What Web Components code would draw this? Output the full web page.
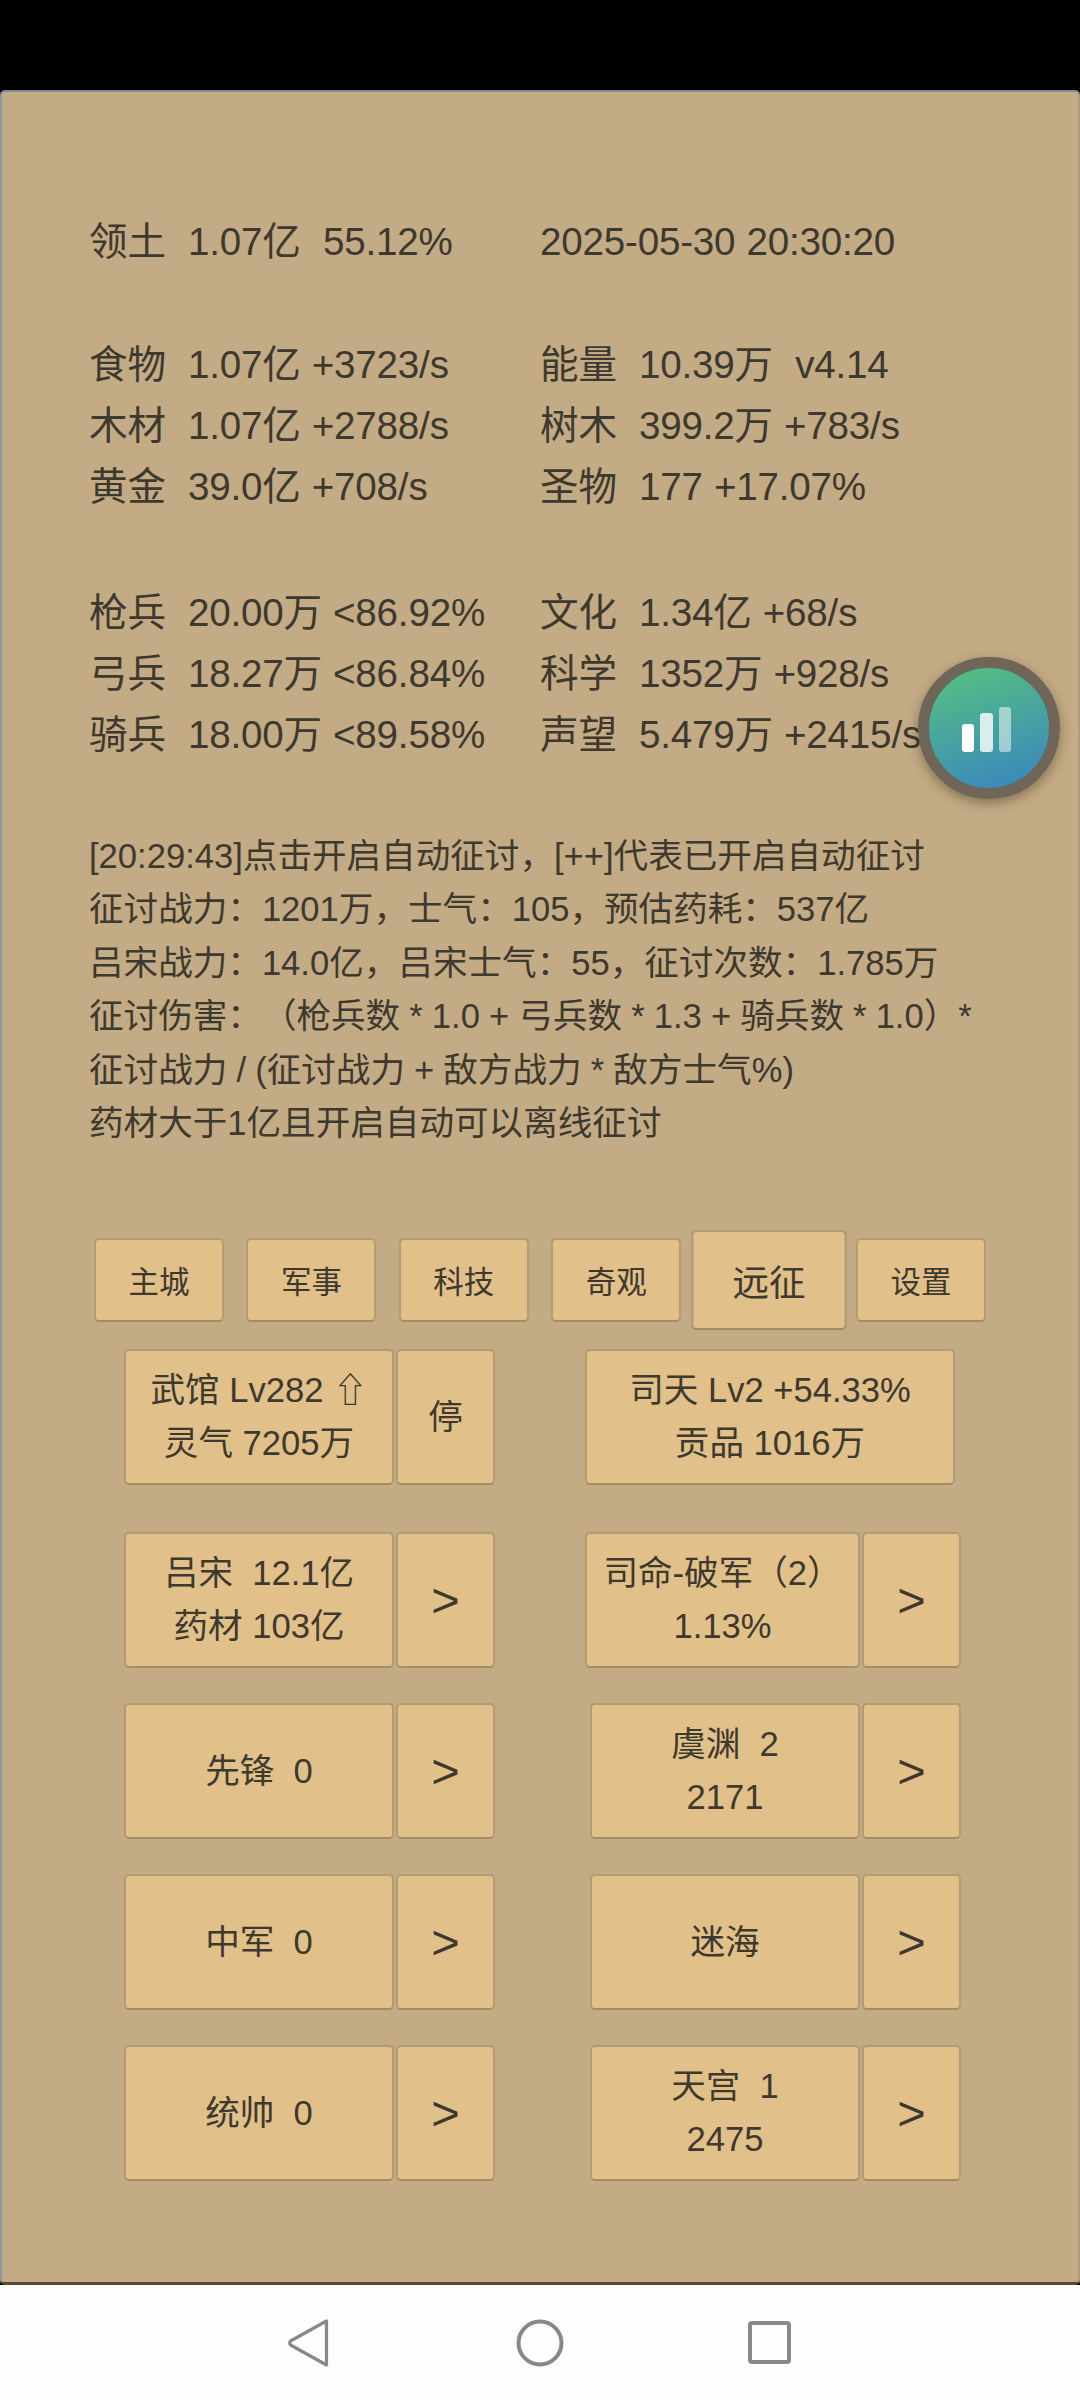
<!DOCTYPE html>
<html lang="zh-CN">
<head>
  <meta charset="UTF-8">
  <title>Game</title>
  <style>
    html, body { margin: 0; background: #000; }
    body { font-family: "Liberation Sans", "Noto Sans CJK SC", sans-serif; text-spacing-trim: space-all; }
  </style>
</head>
<body>
  <script>
    const define = (name, html) => customElements.define(name, class extends HTMLElement {
      constructor() {
        super()
        this.attachShadow({ mode: 'open' }).innerHTML = html
      }
    })

    define('phone-screen', `
      <style>
        :host { display: flex; flex-direction: column; width: 1080px; height: 2400px; background: #000; }
      </style>
      <slot></slot>
    `)

    define('game-panel', `
      <style>
        :host {
          display: block;
          position: relative;
          box-sizing: border-box;
          height: 2195px;
          margin-top: 90px;
          padding-top: 119px;
          background: #c3ab85;
          color: #3d392e;
          border-top: 2px solid #7d8a96;
          border-left: 2px solid #8b97a0;
          border-right: 2px solid #a89c83;
          border-bottom: 3px solid #5a4c33;
          border-radius: 5px;
        }
      </style>
      <slot></slot>
    `)

    define('res-block', `
      <style>
        :host {
          display: grid;
          grid-template-columns: 451px auto;
          padding-left: 87px;
          margin-bottom: 62px;
          font-size: 38.6px;
          letter-spacing: -.2px;
          word-spacing: .6px;
          line-height: 61px;
          white-space: pre;
        }
        :host([wide]) { margin-bottom: 65px; }
      </style>
      <slot></slot>
    `)

    define('log-text', `
      <style>
        :host {
          display: block;
          padding-left: 87px;
          font-size: 34.6px;
          word-spacing: -.5px;
          line-height: 53.4px;
          white-space: nowrap;
        }
      </style>
      <slot></slot>
    `)

    define('tab-bar', `
      <style>
        :host { display: flex; justify-content: center; gap: 22.4px; margin-top: 88px; }
      </style>
      <slot></slot>
    `)

    define('tab-btn', `
      <style>
        :host {
          display: flex;
          align-items: center;
          justify-content: center;
          box-sizing: border-box;
          width: 130px;
          height: 84px;
          font-size: 30.5px;
          background: #e1c08a;
          border: 2px solid #b39c72;
          border-bottom-color: #a48d64;
          border-radius: 5px;
        }
        :host([active]) { transform: scale(1.2); }
      </style>
      <slot></slot>
    `)

    define('act-row', `
      <style>
        :host {
          display: flex;
          height: 136px;
          margin-top: 35px;
          padding-left: 122px;
        }
        .left { display: flex; gap: 2px; width: 461px; }
        .right { display: flex; gap: 2px; }
      </style>
      <div class="left"><slot name="left"></slot></div>
      <div class="right"><slot name="right"></slot></div>
    `)

    define('act-btn', `
      <style>
        :host {
          display: flex;
          align-items: center;
          justify-content: center;
          box-sizing: border-box;
          width: 270px;
          height: 136px;
          font-size: 34.6px;
          line-height: 53px;
          text-align: center;
          white-space: pre;
          background: #e1c08a;
          border: 2px solid #b39c72;
          border-bottom-color: #a48d64;
          border-radius: 5px;
        }
        :host([arrow]) { width: 99px; font-size: 49px; }
        :host([stop]) { width: 99px; }
      </style>
      <div><slot></slot></div>
    `)

    define('float-ball', `
      <style>
        :host {
          position: absolute;
          left: 916px;
          top: 565px;
          display: flex;
          align-items: center;
          justify-content: center;
          box-sizing: border-box;
          width: 142px;
          height: 142px;
          border-radius: 50%;
          border: 11px solid #6f6558;
          background: linear-gradient(162deg, #53c082 12%, #3b86be 88%);
          background-origin: border-box;
          box-shadow: 0 4px 12px rgba(60, 45, 20, .45);
        }
        .bars { display: flex; align-items: flex-end; gap: 6px; height: 45px; margin: 3px 5px 0 0; }
        i { display: block; width: 12.5px; border-radius: 3px; background: #fff; }
        i:nth-child(1) { height: 28px; }
        i:nth-child(2) { height: 39px; opacity: .8; }
        i:nth-child(3) { height: 45px; opacity: .5; }
      </style>
      <div class="bars"><i></i><i></i><i></i></div>
    `)

    define('nav-bar', `
      <style>
        :host { display: flex; justify-content: center; align-items: center; height: 115px; background: #fdfdfd; }
        svg { display: block; fill: none; stroke: #888; stroke-linejoin: round; }
        .row { display: flex; align-items: center; margin-left: -2px; }
        .home { margin: 0 184px 0 187px; }
      </style>
      <div class="row">
        <svg width="41" height="48" viewBox="0 0 41 48" stroke-width="3.200"><path d="M38.500 2 V46 L2.500 26 Q1 24 2.500 22 Z"/></svg>
        <svg class="home" width="48" height="48" viewBox="0 0 48 48" stroke-width="4"><circle cx="24" cy="24" r="21.500"/></svg>
        <svg width="43" height="43" viewBox="0 0 43 43" stroke-width="4"><rect x="2" y="2" width="39" height="39" rx="2"/></svg>
      </div>
    `)
  </script>

  <phone-screen>
    <game-panel>
      <res-block>
        <span>领土  1.07亿  55.12%</span><span>2025-05-30 20:30:20</span>
      </res-block>
      <res-block wide>
        <span>食物  1.07亿 +3723/s</span><span>能量  10.39万  v4.14</span>
        <span>木材  1.07亿 +2788/s</span><span>树木  399.2万 +783/s</span>
        <span>黄金  39.0亿 +708/s</span><span>圣物  177 +17.07%</span>
      </res-block>
      <res-block wide>
        <span>枪兵  20.00万 &lt;86.92%</span><span>文化  1.34亿 +68/s</span>
        <span>弓兵  18.27万 &lt;86.84%</span><span>科学  1352万 +928/s</span>
        <span>骑兵  18.00万 &lt;89.58%</span><span>声望  5.479万 +2415/s</span>
      </res-block>
      <log-text>[20:29:43]点击开启自动征讨，[++]代表已开启自动征讨<br>征讨战力：1201万，士气：105，预估药耗：537亿<br>吕宋战力：14.0亿，吕宋士气：55，征讨次数：1.785万<br>征讨伤害：（枪兵数 * 1.0 + 弓兵数 * 1.3 + 骑兵数 * 1.0）*<br>征讨战力 / (征讨战力 + 敌方战力 * 敌方士气%)<br>药材大于1亿且开启自动可以离线征讨</log-text>
      <tab-bar>
        <tab-btn>主城</tab-btn>
        <tab-btn>军事</tab-btn>
        <tab-btn>科技</tab-btn>
        <tab-btn>奇观</tab-btn>
        <tab-btn active>远征</tab-btn>
        <tab-btn>设置</tab-btn>
      </tab-bar>
      <act-row style="margin-top: 27px">
        <act-btn slot="left">武馆 Lv282 ⇧<br>灵气 7205万</act-btn>
        <act-btn slot="left" stop>停</act-btn>
        <act-btn slot="right" style="width: 370px">司天 Lv2 +54.33%<br>贡品 1016万</act-btn>
      </act-row>
      <act-row style="margin-top: 47px">
        <act-btn slot="left">吕宋  12.1亿<br>药材 103亿</act-btn>
        <act-btn slot="left" arrow>&gt;</act-btn>
        <act-btn slot="right" style="width: 275px">司命-破军（2）<br>1.13%</act-btn>
        <act-btn slot="right" arrow>&gt;</act-btn>
      </act-row>
      <act-row>
        <act-btn slot="left">先锋  0</act-btn>
        <act-btn slot="left" arrow>&gt;</act-btn>
        <act-btn slot="right" style="margin-left: 5px">虞渊  2<br>2171</act-btn>
        <act-btn slot="right" arrow>&gt;</act-btn>
      </act-row>
      <act-row>
        <act-btn slot="left">中军  0</act-btn>
        <act-btn slot="left" arrow>&gt;</act-btn>
        <act-btn slot="right" style="margin-left: 5px">迷海</act-btn>
        <act-btn slot="right" arrow>&gt;</act-btn>
      </act-row>
      <act-row>
        <act-btn slot="left">统帅  0</act-btn>
        <act-btn slot="left" arrow>&gt;</act-btn>
        <act-btn slot="right" style="margin-left: 5px">天宫  1<br>2475</act-btn>
        <act-btn slot="right" arrow>&gt;</act-btn>
      </act-row>
      <float-ball></float-ball>
    </game-panel>
    <nav-bar></nav-bar>
  </phone-screen>
</body>
</html>
